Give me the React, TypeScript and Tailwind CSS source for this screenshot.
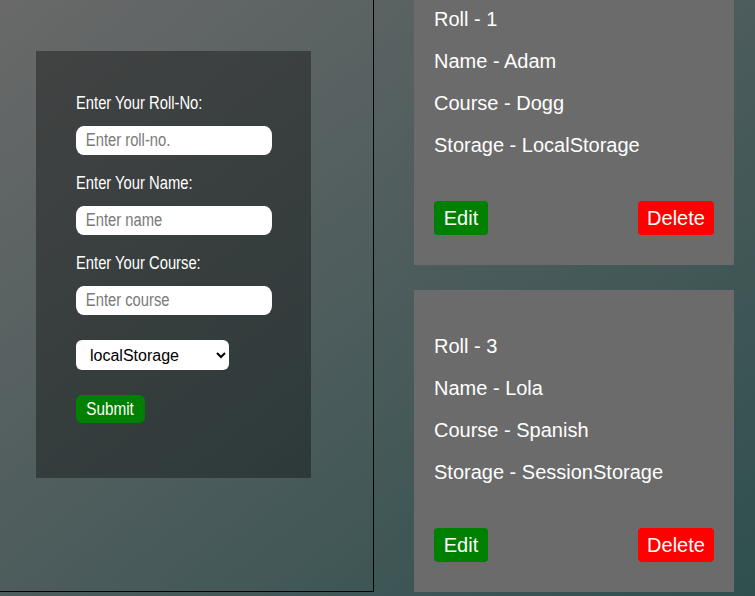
import React from "react";

type Student = { roll: string; name: string; course: string; storage: string };

const students: Student[] = [
  { roll: "1", name: "Adam", course: "Dogg", storage: "LocalStorage" },
  { roll: "3", name: "Lola", course: "Spanish", storage: "SessionStorage" },
];

const sans = { fontFamily: '"Liberation Sans", Arial, sans-serif' };

function Field({ label, placeholder }: { label: string; placeholder: string }) {
  return (
    <div className="flex flex-col items-start mb-[18px]">
      <label className="inline-block origin-left scale-x-[0.82] text-white text-[18px] leading-[21px] h-[21px] whitespace-nowrap">
        {label}
      </label>
      <input
        className="mt-[12px] w-[239px] h-[29px] origin-left scale-x-[0.82] bg-white rounded-[9px] pl-[12px] text-[18px] text-black placeholder:text-[#7a7a7a] outline-none"
        placeholder={placeholder}
        style={sans}
      />
    </div>
  );
}

function Card({ s }: { s: Student }) {
  return (
    <div className="w-[320px] bg-[#6b6b6b] pt-[45px] pb-[30px] px-[20px] text-white" style={sans}>
      <div className="flex flex-col gap-[19px] text-[20px] leading-[23px]">
        <p>Roll - {s.roll}</p>
        <p>Name - {s.name}</p>
        <p>Course - {s.course}</p>
        <p>Storage - {s.storage}</p>
      </div>
      <div className="mt-[44px] flex justify-between">
        <button className="w-[54px] h-[34px] bg-[#008000] rounded-[4px] text-[20px] text-white">Edit</button>
        <button className="w-[76px] h-[34px] bg-[#ff0000] rounded-[4px] text-[20px] text-white">Delete</button>
      </div>
    </div>
  );
}

export default function App() {
  return (
    <div className="w-[755px] h-[596px] overflow-hidden bg-gradient-to-br from-[#696969] to-[#2f4f4f] flex items-start">
      <div className="w-[374px] h-[592px] shrink-0 border-r border-b border-black pl-[36px] pt-[51px]" style={sans}>
        <form
          className="w-[275px] h-[427px] bg-black/35 pl-[40px] pt-[42px] flex flex-col items-start"
          onSubmit={(e) => e.preventDefault()}
        >
          <Field label="Enter Your Roll-No:" placeholder="Enter roll-no." />
          <Field label="Enter Your Name:" placeholder="Enter name" />
          <Field label="Enter Your Course:" placeholder="Enter course" />
          <select
            className="mt-[7px] w-[153px] h-[30px] bg-white text-black rounded-[6px] pl-[10px] text-[16px] border-0 outline-none"
            style={sans}
            defaultValue="local"
          >
            <option value="local">localStorage</option>
            <option value="session">sessionStorage</option>
          </select>
          <button
            type="submit"
            className="mt-[25px] w-[69px] h-[28px] bg-[#008000] rounded-[6px] text-white text-[18px] flex items-center justify-center"
          >
            <span className="inline-block scale-x-[0.85] leading-[21px]">Submit</span>
          </button>
        </form>
      </div>
      <div className="ml-[40px] -mt-[37px] flex flex-col gap-[25px]">
        {students.map((s) => (
          <Card key={s.roll} s={s} />
        ))}
      </div>
    </div>
  );
}
